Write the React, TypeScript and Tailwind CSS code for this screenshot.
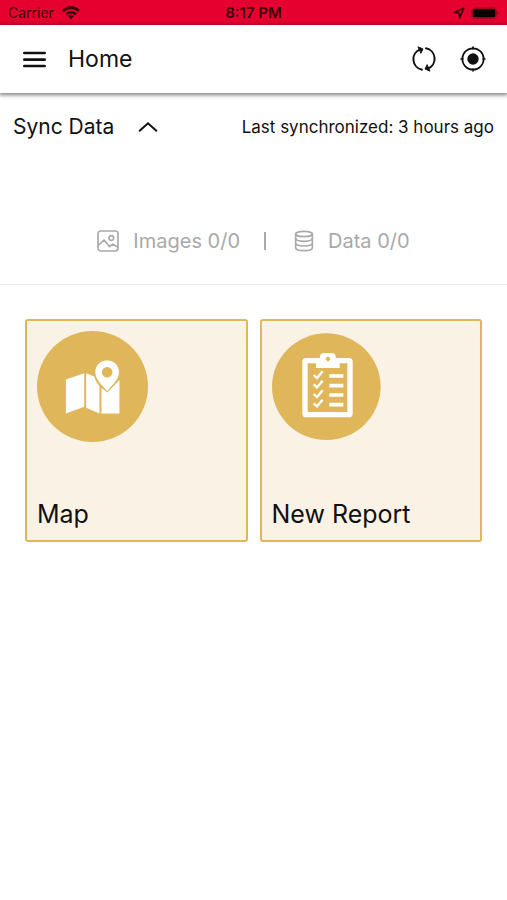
import React from 'react';

function StatusBar() {
  return (
    <div className="grid h-[25px] grid-cols-3 items-center bg-[#e60030] px-2 text-[#39000c]">
      <div className="flex items-center gap-2 text-sm leading-5">
        <span>Carrier</span>
        <svg className="h-3.5 w-[18px]" viewBox="0 0 54 42" fill="none" stroke="currentColor" strokeWidth="8" aria-hidden="true">
          <path d="M3 15Q27-6 51 15" />
          <path d="M12 25Q27 12 42 25" />
          <path d="M18 30Q27 23 36 30L27 40Z" fill="currentColor" stroke="none" />
        </svg>
      </div>
      <span className="text-center text-[15px] leading-5 font-semibold">8:17 PM</span>
      <div className="flex items-center justify-end gap-1.5">
        <svg className="size-3" viewBox="0 0 36 36" fill="none" stroke="currentColor" strokeWidth="5" strokeLinejoin="round" aria-hidden="true">
          <path d="M4 16L32 4L20 32L18 18Z" />
        </svg>
        <svg className="h-3 w-7" viewBox="0 0 84 36" aria-hidden="true">
          <rect x="2" y="2" width="74" height="32" rx="8" fill="none" stroke="#9c0021" strokeWidth="3" />
          <rect x="5" y="5" width="68" height="26" rx="5" fill="#100003" />
          <path d="M79 12Q87 18 79 24Z" fill="#9c0021" />
        </svg>
      </div>
    </div>
  );
}

function Header() {
  return (
    <header className="relative flex h-[68px] items-center bg-white pr-[21px] pl-[22px] shadow-[0_1px_4px_1px_rgba(0,0,0,0.5)]">
      <button type="button" aria-label="Menu">
        <svg className="size-[25px]" viewBox="0 0 75 75" fill="none" stroke="currentColor" strokeWidth="8" strokeLinecap="round" aria-hidden="true">
          <path d="M7 18H68M7 38H68M7 57H68" />
        </svg>
      </button>
      <h1 className="ml-[21px] flex-1 text-[23px] leading-8">Home</h1>
      <div className="flex items-center gap-[23px]">
        <button type="button" aria-label="Synchronize">
          <svg className="size-[26px]" viewBox="0 0 78 78" fill="none" stroke="currentColor" strokeWidth="6" strokeLinecap="round" aria-hidden="true">
            <path d="M33 71A32 32 0 0 1 27 10" />
            <path d="M45 7A32 32 0 0 1 51 68" />
            <path d="M22 3L36 9L30 21Z" fill="currentColor" strokeWidth="3" />
            <path d="M56 75L42 69L48 57Z" fill="currentColor" strokeWidth="3" />
          </svg>
        </button>
        <button type="button" aria-label="My location">
          <svg className="size-[26px]" viewBox="0 0 78 78" fill="none" stroke="currentColor" strokeWidth="5" strokeLinecap="round" aria-hidden="true">
            <circle cx="39" cy="39" r="32" />
            <circle cx="39" cy="39" r="17" fill="currentColor" stroke="none" />
            <path d="M39 3V9M39 69V75M3 39H9M69 39H75" />
          </svg>
        </button>
      </div>
    </header>
  );
}

function SyncPanel() {
  return (
    <section className="border-b border-[#e8e8e8] pb-[31px]">
      <div className="flex h-[67px] items-center justify-between px-[13px]">
        <button type="button" aria-expanded="true" className="flex items-center gap-6 text-[21px] leading-7">
          Sync Data
          <svg className="h-2.5 w-5" viewBox="0 0 60 30" fill="none" stroke="currentColor" strokeWidth="6" strokeLinecap="round" aria-hidden="true">
            <path d="M5 26L30 4L55 26" />
          </svg>
        </button>
        <p className="text-[17px] leading-6">Last synchronized: 3 hours ago</p>
      </div>
      <div className="mt-[69px] flex h-6 items-center justify-center gap-6 text-xl leading-6 text-[#a9a9a9]">
        <div className="flex items-center gap-3.5">
          <svg className="size-[22px]" viewBox="0 0 66 66" fill="none" stroke="currentColor" strokeWidth="5" strokeLinejoin="round" aria-hidden="true">
            <rect x="3" y="3" width="60" height="60" rx="8" />
            <circle cx="43" cy="24" r="7" />
            <path d="M3 47L21 30L38 50L47 42L63 52" />
          </svg>
          <span>Images 0/0</span>
        </div>
        <span className="h-[18px] w-0.5 bg-current" />
        <div className="flex items-center gap-3.5 pl-1">
          <svg className="h-[22px] w-5" viewBox="0 0 60 66" fill="none" stroke="currentColor" strokeWidth="5" aria-hidden="true">
            <ellipse cx="30" cy="12" rx="25" ry="8" />
            <path d="M5 12V53C5 65 55 65 55 53V12" />
            <path d="M5 25C5 37 55 37 55 25M5 39C5 51 55 51 55 39" />
          </svg>
          <span>Data 0/0</span>
        </div>
      </div>
    </section>
  );
}

function MapIcon() {
  return (
    <svg className="size-[111px]" viewBox="52 63 334 334" aria-hidden="true">
      <circle cx="219" cy="230" r="167" fill="#e0b65b" />
      <path d="M139 209L194 190V291L139 311ZM200 190L224 200Q229 216 240 229V311L200 294ZM246 234L263 248L300 211V311H246Z" fill="white" />
      <path d="M263 150C242 150 226 166 226 187C226 211 248 226 263 246C278 226 300 211 300 187C300 166 284 150 263 150Z" fill="white" stroke="#e0b65b" strokeWidth="3" />
      <circle cx="263" cy="187" r="16" fill="#e0b65b" />
    </svg>
  );
}

function ReportIcon() {
  return (
    <svg className="h-[107px] w-[109px]" viewBox="66 69 327 321" aria-hidden="true">
      <ellipse cx="229" cy="230" rx="163" ry="160" fill="#e0b65b" />
      <rect x="165" y="152" width="135" height="162" rx="3" fill="none" stroke="white" strokeWidth="16" />
      <path d="M198 174V154Q198 143 210 143V138Q212 129 221 129H246Q255 129 257 138V143Q269 143 269 154V174Z" fill="white" />
      <path d="M234 139L242 147L234 155L226 147Z" fill="#e0b65b" />
      <g fill="none" stroke="white" strokeWidth="7">
        <path d="M191 195L201 204L218 184M191 223L201 232L218 212M191 252L201 261L218 241M191 280L201 289L218 269" />
        <path d="M238 198H280M238 227H280M238 255H280M238 284H280" strokeWidth="11" />
      </g>
    </svg>
  );
}

function Tile({ label, icon }: { label: string; icon: React.ReactNode }) {
  return (
    <button type="button" className="flex aspect-square flex-col items-start justify-between rounded-[3px] border-2 border-[#e0b65b] bg-[#faf3e5] px-2.5 pt-2.5 pb-2 text-left">
      <span className="flex h-[111px] items-center">{icon}</span>
      <span className="text-[25px] leading-9">{label}</span>
    </button>
  );
}

export default function App() {
  return (
    <div className="min-h-screen bg-white font-['Inter','Liberation_Sans',sans-serif] text-[#111111]">
      <StatusBar />
      <Header />
      <main>
        <SyncPanel />
        <div className="grid grid-cols-2 gap-3 px-[25px] pt-[34px]">
          <Tile label="Map" icon={<MapIcon />} />
          <Tile label="New Report" icon={<ReportIcon />} />
        </div>
      </main>
    </div>
  );
}
